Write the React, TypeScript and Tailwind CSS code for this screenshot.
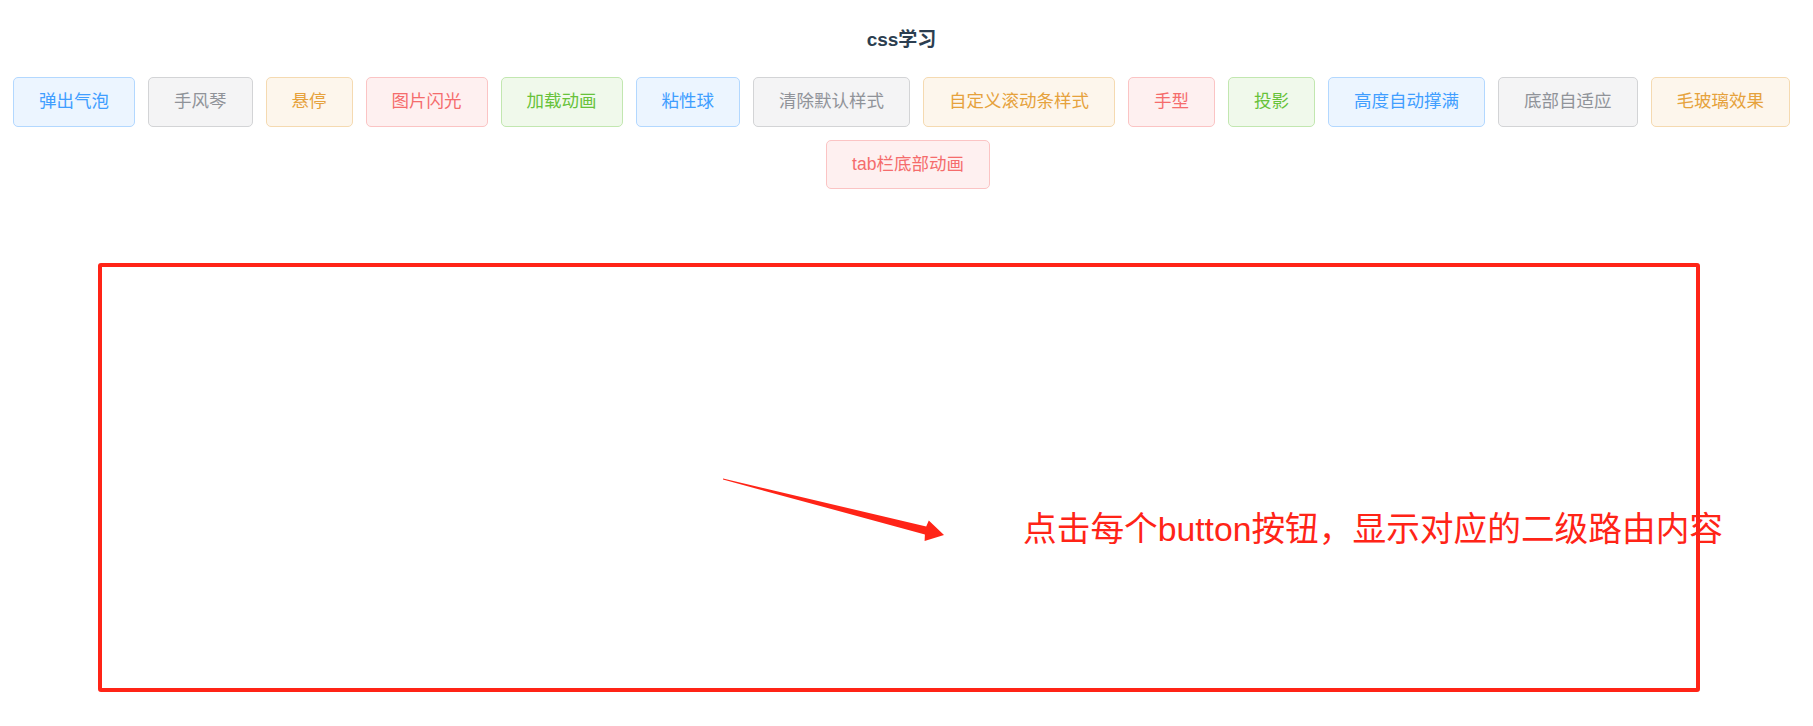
import React from 'react';

type Kind = 'primary' | 'info' | 'warning' | 'danger' | 'success';

const KIND_CLASS: Record<Kind, string> = {
  primary: 'bg-[#ecf5ff] border-[#b3d8ff] text-[#409eff]',
  info: 'bg-[#f4f4f5] border-[#d3d4d6] text-[#909399]',
  warning: 'bg-[#fdf6ec] border-[#f5dab1] text-[#e6a23c]',
  danger: 'bg-[#fef0f0] border-[#fbc4c4] text-[#f56c6c]',
  success: 'bg-[#f0f9eb] border-[#c2e7b0] text-[#67c23a]',
};

const BUTTONS: { label: string; kind: Kind }[] = [
  { label: '弹出气泡', kind: 'primary' },
  { label: '手风琴', kind: 'info' },
  { label: '悬停', kind: 'warning' },
  { label: '图片闪光', kind: 'danger' },
  { label: '加载动画', kind: 'success' },
  { label: '粘性球', kind: 'primary' },
  { label: '清除默认样式', kind: 'info' },
  { label: '自定义滚动条样式', kind: 'warning' },
  { label: '手型', kind: 'danger' },
  { label: '投影', kind: 'success' },
  { label: '高度自动撑满', kind: 'primary' },
  { label: '底部自适应', kind: 'info' },
  { label: '毛玻璃效果', kind: 'warning' },
  { label: 'tab栏底部动画', kind: 'danger' },
];

export default function App() {
  return (
    <div
      className="min-h-screen w-full bg-white"
      style={{ fontFamily: '"Liberation Sans", "Noto Sans CJK SC", sans-serif' }}
    >
      <div className="pr-[10px] pt-[30px] text-center">
        <h3 className="text-[19px] font-bold leading-none text-[#2c3e50]">css学习</h3>
      </div>

      {/* button row, first button in each line keeps Element's margin quirk */}
      <div className="mt-[28px] flex flex-wrap justify-center gap-y-[13px] pr-[10px]">
        {BUTTONS.map((b, i) => (
          <button
            key={b.label}
            className={`${i > 0 ? 'ml-[13px]' : ''} ${KIND_CLASS[b.kind]} cursor-pointer rounded-[5px] border px-[25px] py-[15px] text-[17.5px] leading-none whitespace-nowrap`}
          >
            {b.label}
          </button>
        ))}
      </div>

      {/* annotation box */}
      <div className="ml-[98px] mt-[74px] h-[429px] w-[1602px] rounded-[3px] border-[4px] border-[#ff2417]">
        <div className="flex items-start">
          <svg
            className="ml-[618px] mt-[209px] shrink-0"
            width="226"
            height="68"
            viewBox="720 476 226 68"
          >
            <polygon
              points="723,478.4 926.2,526.6 928.8,520.6 944,535 924.6,541 924.9,534.4 723,479.6"
              fill="#ff2417"
            />
          </svg>
          <div className="ml-[77px] mt-[246px] whitespace-nowrap text-[33.7px] leading-none text-[#ff2417]">
            点击每个button按钮，显示对应的二级路由内容
          </div>
        </div>
      </div>
    </div>
  );
}
